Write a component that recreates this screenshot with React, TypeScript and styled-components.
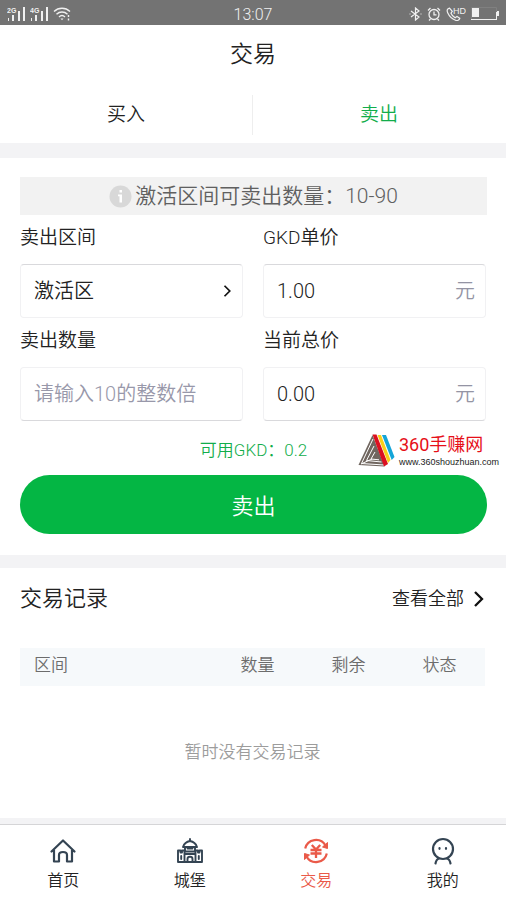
import React from "react";
import styled, { createGlobalStyle } from "styled-components";

const GlobalStyle = createGlobalStyle`
  *, *::before, *::after { box-sizing: border-box; }
  body {
    margin: 0;
    background: #f3f3f5;
    color: #222;
    font-family: Roboto, "Noto Sans CJK SC", sans-serif;
    font-weight: 350;
  }
  button, input, select { font: inherit; color: inherit; }
`;

const Page = styled.div`
  display: flex;
  flex-direction: column;
  min-height: 100vh;
`;

const StatusBar = styled.div`
  display: grid;
  grid-template-columns: 1fr auto 1fr;
  align-items: center;
  height: 25px;
  padding: 0 7px;
  background: #737373;
  color: #f0f0f0;
  font-size: 16px;
  line-height: 25px;
`;

const StatusGroup = styled.div<{ $end?: boolean }>`
  display: flex;
  align-items: center;
  justify-content: ${(p) => (p.$end ? "flex-end" : "flex-start")};
  gap: ${(p) => (p.$end ? "5px" : "4px")};
`;

const Clock = styled.time`
  padding-top: 2px;
`;

const Header = styled.header`
  background: #fff;
`;

const PageTitle = styled.h1`
  margin: 0;
  padding: 12px 0 6px;
  font-size: 23px;
  line-height: 36px;
  font-weight: inherit;
  text-align: center;
`;

const Tabs = styled.div`
  display: grid;
  grid-template-columns: 1fr 1fr;
  padding: 16px 0 8px;
`;

const Tab = styled.button<{ $active?: boolean }>`
  height: 40px;
  border: 0;
  border-right: 1px solid ${(p) => (p.$active ? "transparent" : "#eeeeee")};
  padding: 0;
  background: none;
  font-size: 19px;
  line-height: 36px;
  color: ${(p) => (p.$active ? "#12ad4b" : "inherit")};
`;

const SellForm = styled.form`
  margin-top: 15px;
  padding: 19px 19px 21px 20px;
  background: #fff;
`;

const Notice = styled.p`
  display: flex;
  align-items: center;
  justify-content: center;
  gap: 3px;
  height: 38px;
  margin: 0;
  background: #f2f2f2;
  color: #606060;
  font-size: 21px;
  line-height: 40px;
`;

const Fields = styled.div`
  display: grid;
  grid-template-columns: 1fr 1fr;
  column-gap: 20px;
  padding-right: 1px;
`;

const Label = styled.label`
  display: block;
  padding: 9px 0 12px;
  font-size: 19px;
  line-height: 28px;
`;

const Box = styled.div<{ $edge: "top" | "bottom" }>`
  display: flex;
  align-items: center;
  height: 54px;
  padding: 0 10px 0 13px;
  border: 1px solid #f1f1f3;
  border-${(p) => p.$edge}-color: #d9d9dc;
  border-radius: 4px;
  font-size: 20px;
  line-height: 28px;
`;

const control = `
  flex: 1;
  min-width: 0;
  width: 100%;
  height: 50px;
  padding: 0;
  border: 0;
  outline: 0;
  background: transparent;
`;

const TextInput = styled.input`
  ${control}
  &::placeholder { color: #9898aa; opacity: 1; }
`;

const Select = styled.select`
  ${control}
  appearance: none;
`;

const Unit = styled.span`
  color: #9494a4;
`;

const Balance = styled.p`
  position: relative;
  margin: 0;
  padding: 17px 0 13px;
  color: #12ad4b;
  font-size: 17px;
  line-height: 24px;
  text-align: center;
`;

const Watermark = styled.span`
  position: absolute;
  top: 12px;
  right: -12px;
  display: flex;
  align-items: center;
  gap: 4px;
  text-align: left;
`;

const WatermarkText = styled.span`
  display: flex;
  flex-direction: column;
`;

const WatermarkName = styled.span`
  color: #e60f19;
  font-size: 18px;
  line-height: 24px;
  font-weight: 400;
`;

const WatermarkSite = styled.span`
  color: #222;
  font-family: "Liberation Sans", sans-serif;
  font-size: 9px;
  line-height: 10px;
  font-weight: 400;
`;

const SubmitButton = styled.button`
  display: block;
  width: 100%;
  height: 59px;
  padding: 0 0 2px;
  border: 0;
  border-radius: 30px;
  background: #04b644;
  color: #fff;
  font-size: 22px;
`;

const Records = styled.section`
  flex: 1 0 auto;
  margin-top: 13px;
  padding: 15px 21px 0 20px;
  background: #fff;
`;

const RecordsHead = styled.div`
  display: flex;
  align-items: center;
  justify-content: space-between;
  height: 32px;
`;

const RecordsTitle = styled.h2`
  margin: 0;
  font-size: 22px;
  line-height: 32px;
  font-weight: inherit;
`;

const MoreLink = styled.a`
  display: flex;
  align-items: center;
  gap: 5px;
  color: inherit;
  font-size: 18px;
  line-height: 26px;
  text-decoration: none;
`;

const Table = styled.table`
  width: 100%;
  margin-top: 33px;
  border-collapse: collapse;
  table-layout: fixed;
`;

const HeadCell = styled.th<{ $first?: boolean }>`
  width: ${(p) => (p.$first ? "auto" : "91px")};
  height: 38px;
  padding: ${(p) => (p.$first ? "0 0 4px 14px" : "0 0 4px")};
  background: #f6f9fb;
  color: #6c6c6c;
  font-size: 17px;
  line-height: 24px;
  font-weight: inherit;
  text-align: ${(p) => (p.$first ? "left" : "center")};
`;

const EmptyCell = styled.td`
  height: 128px;
  padding: 0;
  color: #9c9c9c;
  font-size: 17px;
  text-align: center;
`;

const NavBar = styled.nav`
  display: grid;
  grid-template-columns: repeat(4, 1fr);
  height: 76px;
  margin-top: 6px;
  border-top: 1px solid #d5d5d7;
  background: #fff;
`;

const NavItem = styled.a<{ $active?: boolean }>`
  display: flex;
  flex-direction: column;
  align-items: center;
  gap: 5px;
  padding-top: 12px;
  color: ${(p) => (p.$active ? "#ea5a49" : "inherit")};
  font-size: 16px;
  line-height: 22px;
  text-decoration: none;
`;

const Signal = ({ label }: { label: string }) => (
  <svg width="19" height="14" viewBox="0 0 19 14" fill="currentColor" aria-hidden="true">
    <text x="0" y="6" fontSize="7" fontWeight="700" fontFamily="Liberation Sans, sans-serif">{label}</text>
    <rect x="1" y="11" width="1" height="3" />
    <rect x="5" y="8" width="2" height="6" />
    <rect x="11" y="4" width="2" height="10" />
    <rect x="16" y="0" width="2" height="14" />
  </svg>
);

const Wifi = () => (
  <svg width="18" height="14" viewBox="0 0 18 14" fill="none" stroke="currentColor" strokeWidth="1.4" aria-hidden="true">
    <path d="M1 4.500C5.500.2 12.500.2 17 4.500M3.500 7.300c3.200-3 7.800-3 11 0M6 10c1.800-1.700 4.200-1.700 6 0" />
    <path d="m7.500 11.500 1.500 1.700 1.500-1.700z" fill="currentColor" stroke="none" />
    <path d="M15.500 8v2M15.500 11.500v2" />
  </svg>
);

const Bluetooth = () => (
  <svg width="13" height="14" viewBox="0 0 13 14" fill="none" stroke="currentColor" strokeWidth="1.200" aria-hidden="true">
    <path d="m2 4 8 6-3.500 3V1L10 4l-8 6M.5 7h1M11.500 7h1" />
  </svg>
);

const Alarm = () => (
  <svg width="14" height="14" viewBox="0 0 14 14" fill="none" stroke="currentColor" strokeWidth="1.300" aria-hidden="true">
    <circle cx="7" cy="7.500" r="5" />
    <path d="M7 4.500v3.300h2.500M1 3.500 3.500 1M13 3.500 10.500 1M3.500 12 2 13.500M10.500 12l1.500 1.500" />
  </svg>
);

const HdCall = () => (
  <svg width="20" height="14" viewBox="0 0 20 14" fill="none" stroke="currentColor" strokeWidth="1.200" aria-hidden="true">
    <path d="M3.500 1.200C1.200 1.600.6 3.500 1.800 6c1.600 3.500 4.200 6 7.700 7.300 2 .7 3.700-.2 4.300-2l-2.800-1.900-1.900 1.300C7.200 9.600 5.800 8.200 5 6.200l1.300-1.800z" />
    <text x="7" y="7" fontSize="9" fill="currentColor" stroke="none" fontFamily="Liberation Sans, sans-serif">HD</text>
  </svg>
);

const Battery = () => (
  <svg width="28" height="13" viewBox="0 0 28 13" aria-hidden="true">
    <path d="M.5 12.500h25V.5H.5z" fill="none" stroke="#808080" />
    <path d="M0 12.500h26M25.500 5v8" stroke="#f0f0f0" />
    <path d="M1 1h7v9H1zM26 4h2v5h-2z" fill="#f0f0f0" />
  </svg>
);

const Info = () => (
  <svg width="23" height="23" viewBox="0 0 23 23" aria-hidden="true">
    <circle cx="11.500" cy="11.500" r="11" fill="#d8d8d8" />
    <path d="M10.500 5h2.500v2.500h-2.500zM9 9.500h4v8h-2.500v-6.300H9z" fill="#fff" />
  </svg>
);

const Chevron = ({ size }: { size: number }) => (
  <svg width={size} height={size} viewBox="0 0 16 16" fill="none" stroke="#111" strokeWidth="2.300" aria-hidden="true">
    <path d="m6 1 7 7-7 7" />
  </svg>
);

const BrandMark = () => (
  <svg width="37" height="33" viewBox="0 0 37 33" aria-hidden="true">
    <path d="M14.500 1 .5 31l26 1.500z" fill="#70665f" />
    <path d="M15 5 3.500 29.500 26 31M16 12 8.500 26.500l15 1.500M17 18l-4 7 8 .8M3 30l11-5" fill="none" stroke="#fff" strokeWidth="1" />
    <path d="M14.500.5h4L30 30l-4 2.500z" fill="#db1020" />
    <path d="M19.500 1H23l9.500 25-2.500 3z" fill="#f9cf19" />
    <path d="M24 1h4l8.500 22-2.800 3z" fill="#14a5d8" />
  </svg>
);

const NavSvg = ({ children }: { children: React.ReactNode }) => (
  <svg width="28" height="28" viewBox="0 0 28 28" fill="none" stroke="#344453" strokeWidth="2.200" strokeLinejoin="round" strokeLinecap="round" aria-hidden="true">
    {children}
  </svg>
);

const HomeIcon = () => (
  <NavSvg>
    <path d="M2.500 14.500 14 3.500l11.500 11M5 13v11.500h5V18c0-4 8-4 8 0v6.500h5V13" />
  </NavSvg>
);

const CastleIcon = () => (
  <NavSvg>
    <g strokeWidth="1.900">
      <path d="M14 2v2M7 10c1-3 4-5.500 7-6 3 .5 6 3 7 6zM9 10v4M19 10v4M11.500 11.500h5" />
      <path d="M2 13.500h2.500v2H6v-2h2.500v11.500H2zM26 13.500h-2.500v2H22v-2h-2.500v11.500H26zM8.500 14.500h11M8.500 17h11M5.200 19v3M22.800 19v3M8 25h12" />
      <path d="M11.500 25v-3c0-3 5-3 5 0v3" />
    </g>
  </NavSvg>
);

const TradeIcon = () => (
  <NavSvg>
    <g stroke="#ea5a49" strokeLinecap="butt">
      <path d="M3.200 11.500A11 11 0 0 1 23.500 8.500M24.800 16.500A11 11 0 0 1 4.500 19.500" />
      <path d="M25.500 5.500v6l-5-1.500zM2.500 22.500v-6l5 1.500z" fill="#ea5a49" strokeWidth="1" />
      <path d="m9.800 8 4.200 4.500L18.200 8M8.500 13h11M8.500 16.500h11M14 12v9" strokeWidth="2.300" />
    </g>
  </NavSvg>
);

const ProfileIcon = () => (
  <NavSvg>
    <circle cx="14" cy="12" r="10" />
    <path d="M10.500 11.200v.6M17 11.200v.6M10 21.500c-2 .5-3 2-3.500 5M18 21.500c2 .5 3 2 3.500 5" />
  </NavSvg>
);

const navItems = [
  { label: "首页", href: "#home", icon: <HomeIcon /> },
  { label: "城堡", href: "#castle", icon: <CastleIcon /> },
  { label: "交易", href: "#trade", icon: <TradeIcon />, active: true },
  { label: "我的", href: "#profile", icon: <ProfileIcon /> },
];

export default function App() {
  return (
    <Page>
      <GlobalStyle />
      <StatusBar>
        <StatusGroup>
          <Signal label="2G" />
          <Signal label="4G" />
          <Wifi />
        </StatusGroup>
        <Clock>13:07</Clock>
        <StatusGroup $end>
          <Bluetooth />
          <Alarm />
          <HdCall />
          <Battery />
        </StatusGroup>
      </StatusBar>

      <Header>
        <PageTitle>交易</PageTitle>
        <Tabs role="tablist">
          <Tab type="button" role="tab" aria-selected={false}>买入</Tab>
          <Tab type="button" role="tab" aria-selected $active>卖出</Tab>
        </Tabs>
      </Header>

      <SellForm onSubmit={(e: React.FormEvent) => e.preventDefault()}>
        <Notice>
          <Info />
          <span>激活区间可卖出数量：10-90</span>
        </Notice>
        <Fields>
          <div>
            <Label htmlFor="zone">卖出区间</Label>
            <Box $edge="top">
              <Select id="zone" defaultValue="active">
                <option value="active">激活区</option>
              </Select>
              <Chevron size={12} />
            </Box>
          </div>
          <div>
            <Label htmlFor="price">GKD单价</Label>
            <Box $edge="top">
              <TextInput id="price" defaultValue="1.00" />
              <Unit>元</Unit>
            </Box>
          </div>
          <div>
            <Label htmlFor="amount">卖出数量</Label>
            <Box $edge="bottom">
              <TextInput id="amount" placeholder="请输入10的整数倍" />
            </Box>
          </div>
          <div>
            <Label htmlFor="total">当前总价</Label>
            <Box $edge="bottom">
              <TextInput id="total" defaultValue="0.00" readOnly />
              <Unit>元</Unit>
            </Box>
          </div>
        </Fields>
        <Balance>
          可用GKD：0.2
          <Watermark>
            <BrandMark />
            <WatermarkText>
              <WatermarkName>360手赚网</WatermarkName>
              <WatermarkSite>www.360shouzhuan.com</WatermarkSite>
            </WatermarkText>
          </Watermark>
        </Balance>
        <SubmitButton type="submit">卖出</SubmitButton>
      </SellForm>

      <Records>
        <RecordsHead>
          <RecordsTitle>交易记录</RecordsTitle>
          <MoreLink href="#records">
            查看全部
            <Chevron size={16} />
          </MoreLink>
        </RecordsHead>
        <Table>
          <thead>
            <tr>
              <HeadCell scope="col" $first>区间</HeadCell>
              <HeadCell scope="col">数量</HeadCell>
              <HeadCell scope="col">剩余</HeadCell>
              <HeadCell scope="col">状态</HeadCell>
            </tr>
          </thead>
          <tbody>
            <tr>
              <EmptyCell colSpan={4}>暂时没有交易记录</EmptyCell>
            </tr>
          </tbody>
        </Table>
      </Records>

      <NavBar>
        {navItems.map((item) => (
          <NavItem key={item.label} href={item.href} $active={item.active} aria-current={item.active ? "page" : undefined}>
            {item.icon}
            {item.label}
          </NavItem>
        ))}
      </NavBar>
    </Page>
  );
}
